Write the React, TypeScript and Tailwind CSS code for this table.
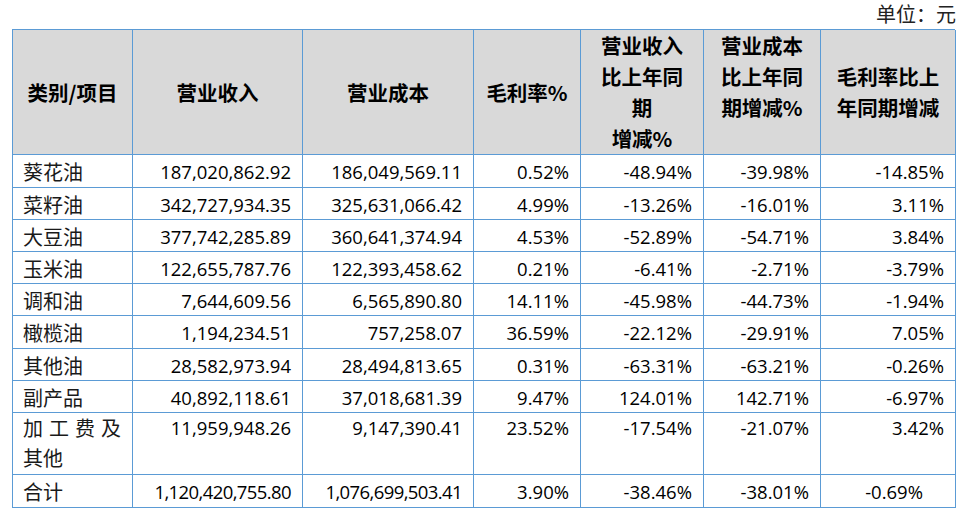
import React from "react";

const rows: string[][] = [
  ["葵花油", "187,020,862.92", "186,049,569.11", "0.52%", "-48.94%", "-39.98%", "-14.85%"],
  ["菜籽油", "342,727,934.35", "325,631,066.42", "4.99%", "-13.26%", "-16.01%", "3.11%"],
  ["大豆油", "377,742,285.89", "360,641,374.94", "4.53%", "-52.89%", "-54.71%", "3.84%"],
  ["玉米油", "122,655,787.76", "122,393,458.62", "0.21%", "-6.41%", "-2.71%", "-3.79%"],
  ["调和油", "7,644,609.56", "6,565,890.80", "14.11%", "-45.98%", "-44.73%", "-1.94%"],
  ["橄榄油", "1,194,234.51", "757,258.07", "36.59%", "-22.12%", "-29.91%", "7.05%"],
  ["其他油", "28,582,973.94", "28,494,813.65", "0.31%", "-63.31%", "-63.21%", "-0.26%"],
  ["副产品", "40,892,118.61", "37,018,681.39", "9.47%", "124.01%", "142.71%", "-6.97%"],
];

const FONT = "font-['Open_Sans','Noto_Sans_CJK_SC',sans-serif]";
const CJK = "font-['Noto_Sans_CJK_SC',sans-serif]";
const cellB = "border-r border-b border-[#5B9BD5]";
const hdr = `${cellB} bg-[#D9D9D9] flex flex-col items-center text-center ${CJK} font-bold text-[20.5px] leading-[31px] text-black`;

function Label({ text }: { text: string }) {
  return (
    <div className={`${cellB} pl-[10px] pt-[2px] ${CJK} text-[20px] leading-[30px] text-[#1a1a1a]`}>{text}</div>
  );
}

function Num({ text, extra = "" }: { text: string; extra?: string }) {
  return (
    <div className={`${cellB} pr-[11px] pt-[2px] text-right ${FONT} text-[18.5px] leading-[30px] text-black ${extra}`}>
      {text}
    </div>
  );
}

export default function App() {
  return (
    <div className="w-[969px] h-[517px] bg-white overflow-hidden">
      <div className="ml-[13px] w-[943px]">
        <div className={`h-[29px] text-right ${CJK} text-[20px] leading-[28px] text-[#222]`}>
          单位：元
        </div>
        <div
          className="grid grid-cols-[120px_170px_171px_107px_123px_117px_135px] grid-rows-[125px_33px_32px_32px_32px_32px_33px_32px_32px_62px_33px] border-l border-t border-[#5B9BD5] w-[943px] -ml-[1px]"
        >
          <div className={`${hdr} justify-center`}>类别/项目</div>
          <div className={`${hdr} justify-center`}>营业收入</div>
          <div className={`${hdr} justify-center`}>营业成本</div>
          <div className={`${hdr} justify-center`}>毛利率%</div>
          <div className={`${hdr} justify-start`}>
            <span>营业收入</span>
            <span>比上年同</span>
            <span>期</span>
            <span>增减%</span>
          </div>
          <div className={`${hdr} justify-start`}>
            <span>营业成本</span>
            <span>比上年同</span>
            <span>期增减%</span>
          </div>
          <div className={`${hdr} justify-center`}>
            <span>毛利率比上</span>
            <span>年同期增减</span>
          </div>

          {rows.map((r) => (
            <React.Fragment key={r[0]}>
              <Label text={r[0]} />
              {r.slice(1).map((v, i) => (
                <Num key={i} text={v} />
              ))}
            </React.Fragment>
          ))}

          <div className={`${cellB} pl-[10px] pr-[11px] pt-0 ${CJK} text-[20px] leading-[30px] text-[#1a1a1a]`}>
            <div className="flex justify-between">
              <span>加</span>
              <span>工</span>
              <span>费</span>
              <span>及</span>
            </div>
            <div>其他</div>
          </div>
          <Num text="11,959,948.26" extra="!pt-0" />
          <Num text="9,147,390.41" extra="!pt-0" />
          <Num text="23.52%" extra="!pt-0" />
          <Num text="-17.54%" extra="!pt-0" />
          <Num text="-21.07%" extra="!pt-0" />
          <Num text="3.42%" extra="!pt-0" />

          <Label text="合计" />
          <Num text="1,120,420,755.80" extra="tracking-[-0.6px]" />
          <Num text="1,076,699,503.41" extra="tracking-[-0.6px]" />
          <Num text="3.90%" />
          <Num text="-38.46%" />
          <Num text="-38.01%" />
          <Num text="-0.69%" extra="!pr-[32px]" />
        </div>
      </div>
    </div>
  );
}
